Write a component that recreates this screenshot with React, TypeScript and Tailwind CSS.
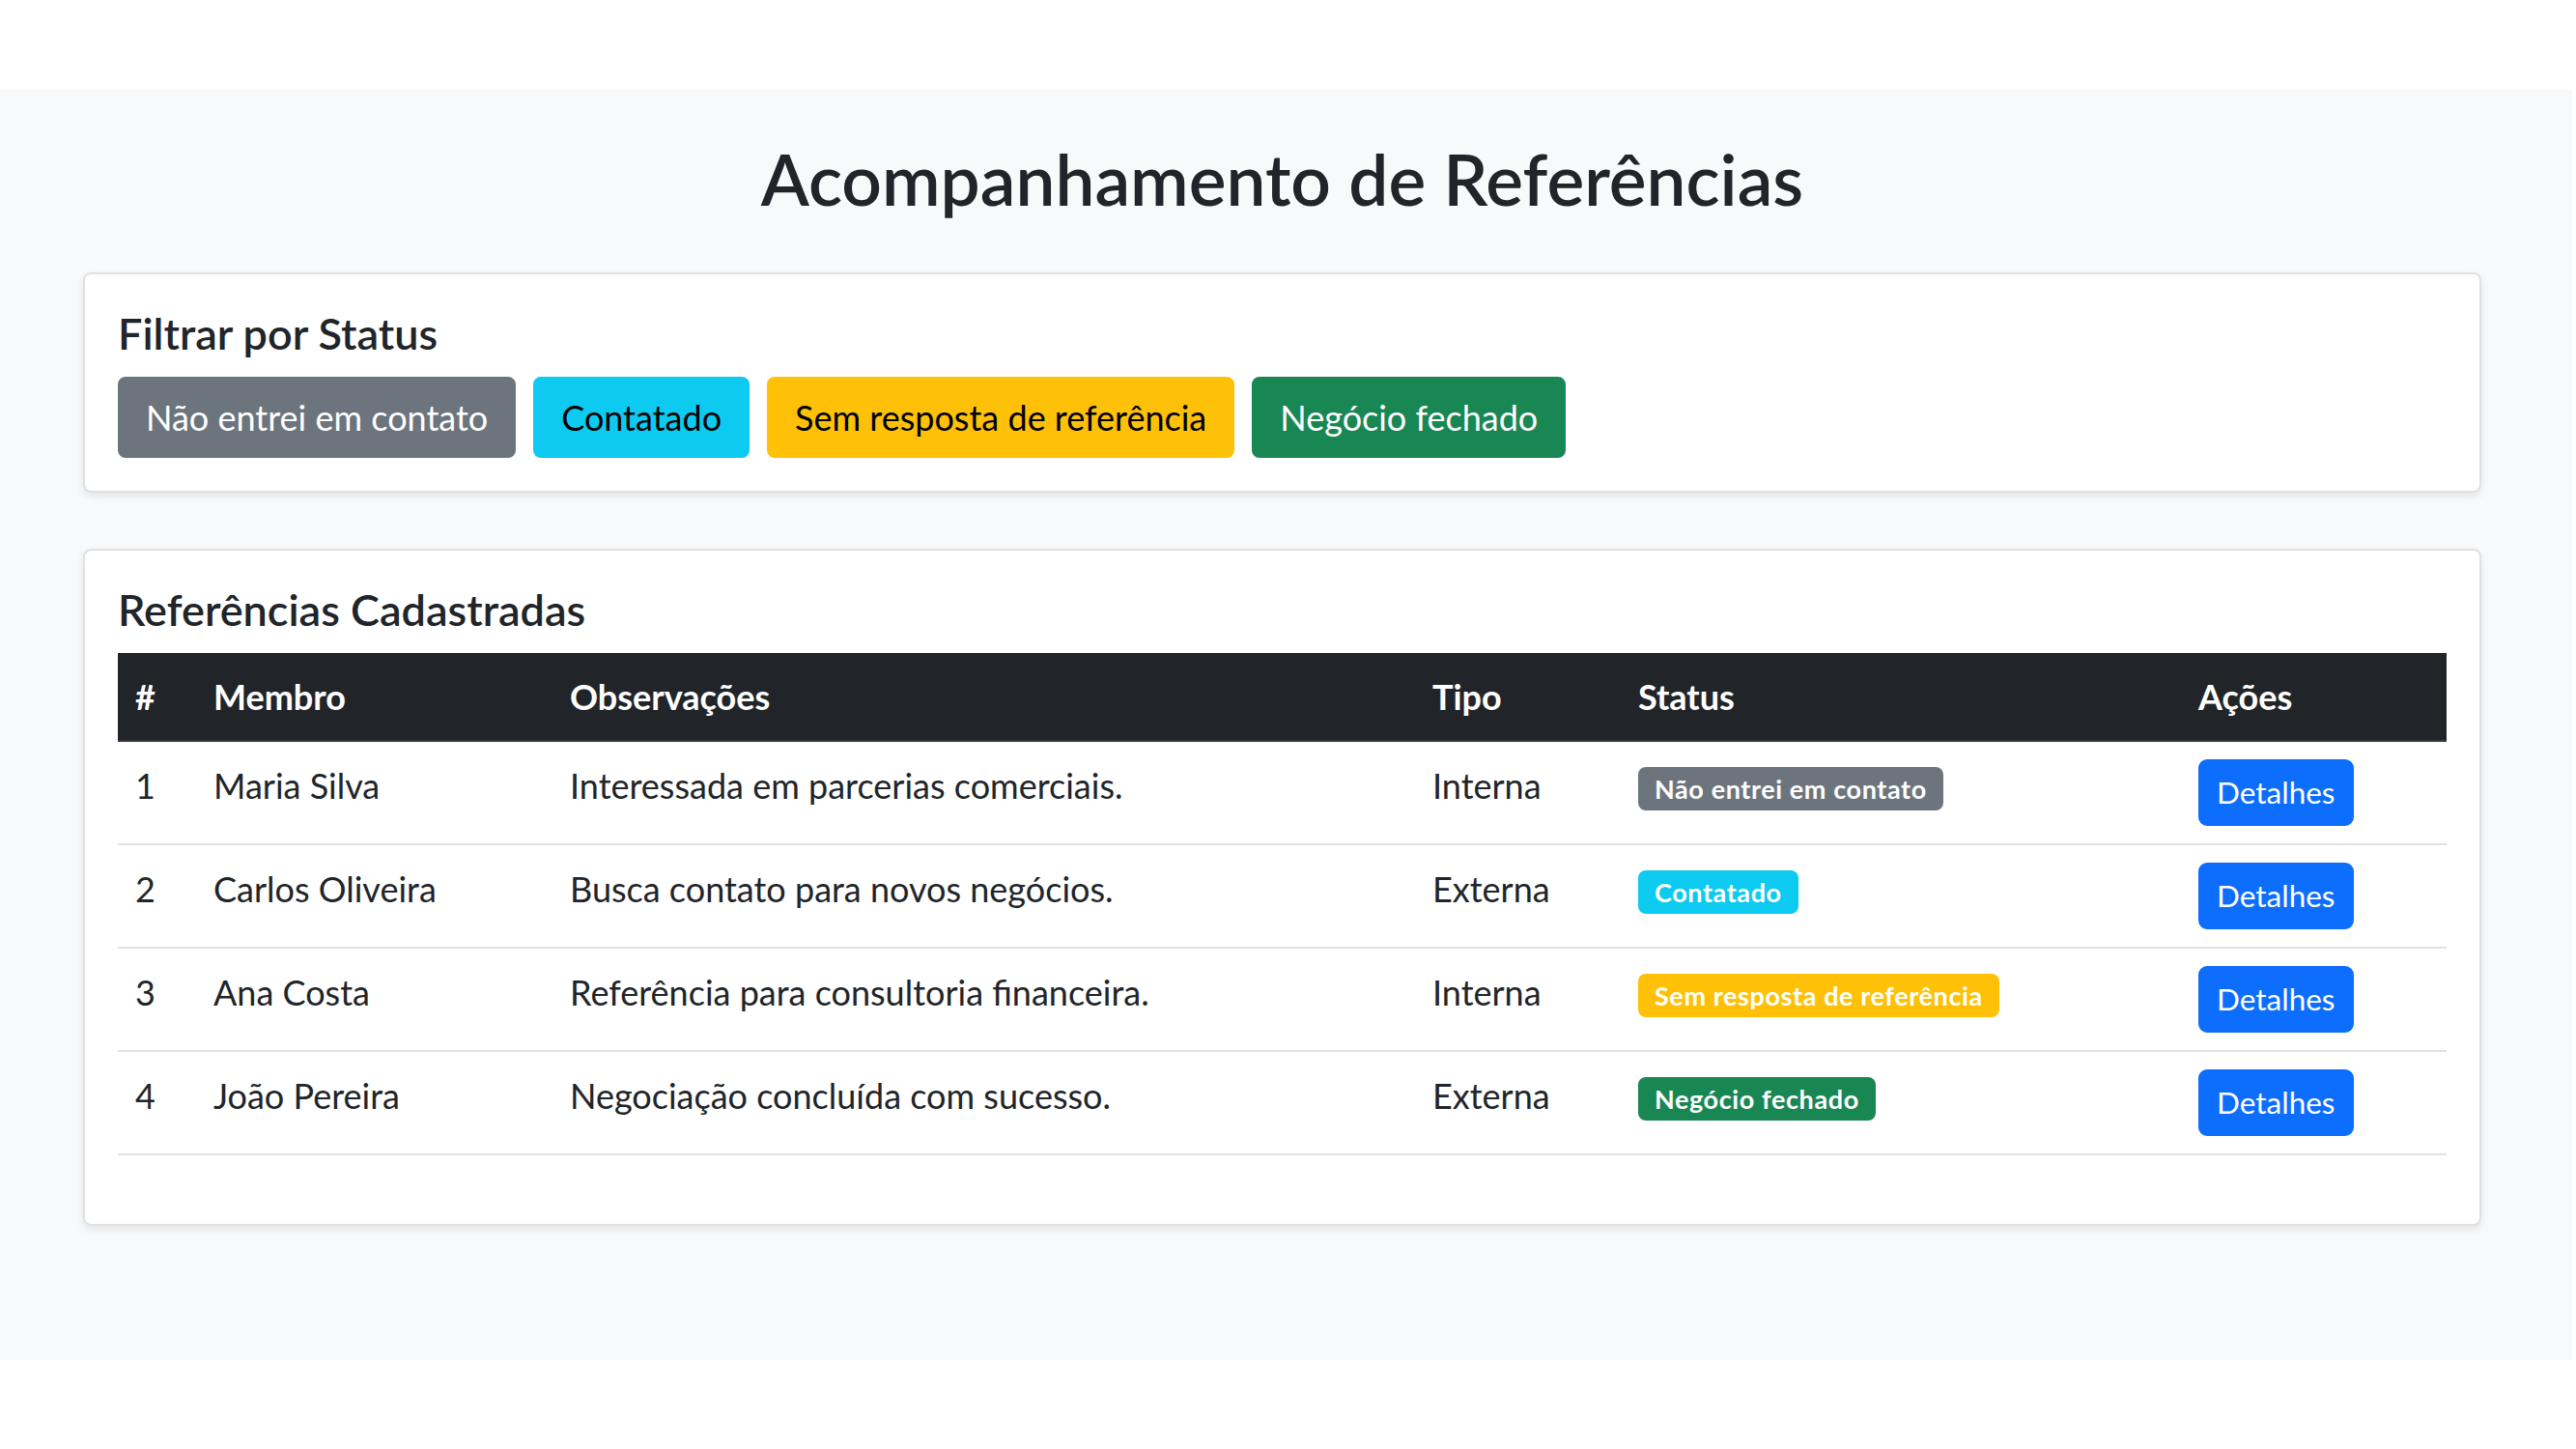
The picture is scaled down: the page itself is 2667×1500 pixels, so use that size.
const filters = [
  { label: "Não entrei em contato", cls: "bg-[#6c757d] border-[#6c757d] text-white" },
  { label: "Contatado", cls: "bg-[#0dcaf0] border-[#0dcaf0] text-black" },
  { label: "Sem resposta de referência", cls: "bg-[#ffc107] border-[#ffc107] text-black" },
  { label: "Negócio fechado", cls: "bg-[#198754] border-[#198754] text-white" },
];

const rows = [
  { id: 1, membro: "Maria Silva", obs: "Interessada em parcerias comerciais.", tipo: "Interna", status: "Não entrei em contato", badge: "bg-[#6c757d]" },
  { id: 2, membro: "Carlos Oliveira", obs: "Busca contato para novos negócios.", tipo: "Externa", status: "Contatado", badge: "bg-[#0dcaf0]" },
  { id: 3, membro: "Ana Costa", obs: "Referência para consultoria financeira.", tipo: "Interna", status: "Sem resposta de referência", badge: "bg-[#ffc107]" },
  { id: 4, membro: "João Pereira", obs: "Negociação concluída com sucesso.", tipo: "Externa", status: "Negócio fechado", badge: "bg-[#198754]" },
];

export default function App() {
  return (
    <div className="min-h-screen bg-white font-['Lato',sans-serif] text-[#212529]">
      <div className="h-[93px]" />
      <div className="w-[2663px] h-[1315px] bg-[#f8f9fa] pl-[86px] pr-[94px] pt-[49px]">
        <h2 className="text-center text-[73px] leading-[86px] font-semibold mb-[54px]">
          Acompanhamento de Referências
        </h2>

        {/* filtros */}
        <div className="bg-white border-2 border-[#dfe1e3] rounded-[8px] shadow-[0_4px_9px_rgba(0,0,0,0.08)] p-[34px]">
          <h5 className="text-[45px] leading-[54px] font-semibold mb-[18px]">Filtrar por Status</h5>
          <div className="flex gap-[18px]">
            {filters.map((f) => (
              <button
                key={f.label}
                className={`${f.cls} border-2 rounded-[8px] px-[27px] py-[13px] text-[36px] leading-[54px]`}
              >
                {f.label}
              </button>
            ))}
          </div>
        </div>

        {/* tabela */}
        <div className="mt-[58px] bg-white border-2 border-[#dfe1e3] rounded-[8px] shadow-[0_4px_9px_rgba(0,0,0,0.08)] p-[34px]">
          <h5 className="text-[45px] leading-[54px] font-semibold mb-[18px]">Referências Cadastradas</h5>
          <table className="w-full table-fixed border-collapse mb-[37px] text-[36px] leading-[54px]">
            <thead className="bg-[#212529] text-white">
              <tr className="border-b-2 border-[#373b3e]">
                <th className="w-[81px] p-[18px] text-left font-bold align-top">#</th>
                <th className="w-[369px] p-[18px] text-left font-bold align-top">Membro</th>
                <th className="w-[893px] p-[18px] text-left font-bold align-top">Observações</th>
                <th className="w-[213px] p-[18px] text-left font-bold align-top">Tipo</th>
                <th className="w-[580px] p-[18px] text-left font-bold align-top">Status</th>
                <th className="w-[275px] p-[18px] text-left font-bold align-top">Ações</th>
              </tr>
            </thead>
            <tbody>
              {rows.map((r) => (
                <tr key={r.id} className="border-b-2 border-[#dee2e6]">
                  <td className="p-[18px] align-top">{r.id}</td>
                  <td className="p-[18px] align-top">{r.membro}</td>
                  <td className="p-[18px] align-top">{r.obs}</td>
                  <td className="p-[18px] align-top">{r.tipo}</td>
                  <td className="p-[18px] align-top">
                    <span className={`${r.badge} inline-block text-white text-[27px] leading-none font-bold tracking-[0.6px] px-[17px] py-[9px] rounded-[8px]`}>
                      {r.status}
                    </span>
                  </td>
                  <td className="p-[18px] align-top">
                    <button className="bg-[#0d6efd] border-2 border-[#0d6efd] text-white text-[31.5px] leading-[47px] px-[17px] py-[9px] rounded-[9px]">
                      Detalhes
                    </button>
                  </td>
                </tr>
              ))}
            </tbody>
          </table>
        </div>
      </div>
    </div>
  );
}
